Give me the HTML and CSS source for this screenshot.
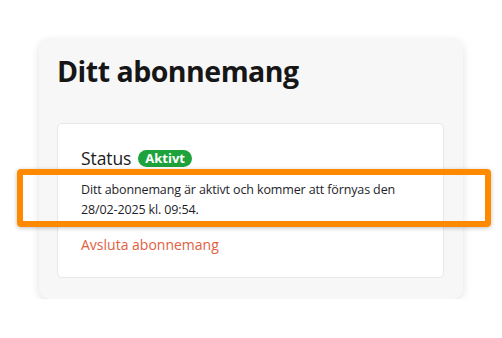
FILE: index.html
```html
<!DOCTYPE html>
<html lang="sv">
<head>
<meta charset="utf-8">
<title>Ditt abonnemang</title>
<link rel="stylesheet" href="styles.css">
</head>
<body>
<main class="panel">
  <h1 class="title">Ditt abonnemang</h1>
  <section class="card">
    <div class="status-row">
      <span class="status-label">Status</span>
      <span class="badge">Aktivt</span>
    </div>
    <div class="desc-wrap">
      <p class="desc">Ditt abonnemang är aktivt och kommer att förnyas den 28/02-2025 kl. 09:54.</p>
      <div class="highlight"></div>
    </div>
    <a class="cancel" href="#">Avsluta abonnemang</a>
  </section>
</main>
</body>
</html>
```
FILE: styles.css
```css
* { box-sizing: border-box; }
html, body { margin: 0; padding: 0; background: #ffffff; }
body {
  font-family: "Open Sans", "Noto Sans", "Liberation Sans", sans-serif;
  color: #1b1b1b;
  padding-top: 39px;
}
.panel {
  width: 424px;
  margin: 0 auto;
  background: #f7f7f7;
  border-radius: 10px;
  box-shadow: 0 2px 8px rgba(0,0,0,0.12);
  padding: 12px 19px 21px 18px;
}
.title {
  margin: 0 0 32px;
  font-size: 28.5px;
  font-weight: 700;
  line-height: 40px;
  letter-spacing: -0.5px;
  color: #161616;
}
.card {
  background: #ffffff;
  border: 1px solid #e8e8e8;
  border-radius: 5px;
  padding: 22px 22px 22px 23px;
}
.status-row {
  display: flex;
  align-items: center;
  gap: 7px;
  height: 24px;
}
.status-label {
  font-size: 17.5px;
  font-weight: 500;
  line-height: 24px;
  letter-spacing: -0.1px;
}
.badge {
  background: #1ea23c;
  color: #ffffff;
  font-size: 13px;
  font-weight: 700;
  line-height: 17px;
  padding: 0 7px;
  border-radius: 9px;
}
.desc-wrap {
  position: relative;
  margin-top: 10px;
}
.desc {
  margin: 0;
  font-size: 12.5px;
  line-height: 20px;
  letter-spacing: -0.13px;
  color: #1e1e2a;
}
.highlight {
  position: absolute;
  left: -64px;
  right: -70px;
  top: -11px;
  bottom: -7px;
  border: 6px solid #ff8a00;
  border-radius: 4px;
  box-shadow: 0 1px 4px rgba(0,0,0,0.25);
  pointer-events: none;
}
.cancel {
  display: block;
  width: max-content;
  margin-top: 15px;
  font-size: 14px;
  line-height: 20px;
  color: #e2603f;
  text-decoration: none;
}
```
